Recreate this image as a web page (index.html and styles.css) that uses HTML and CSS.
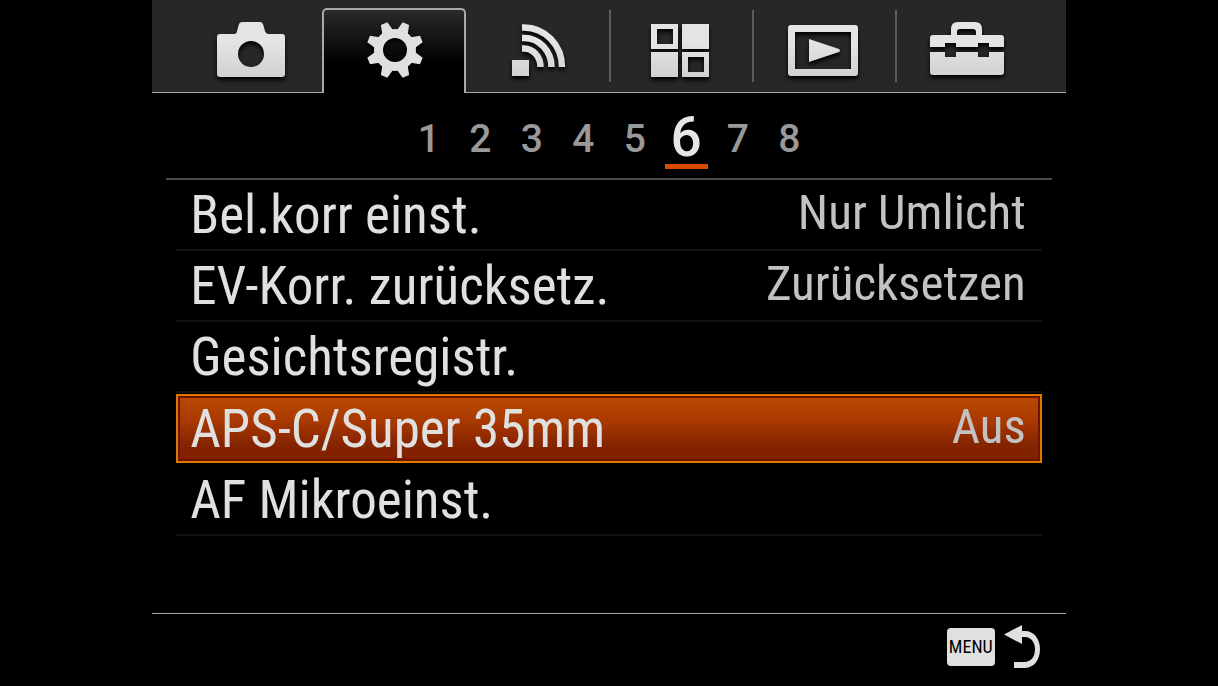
FILE: index.html
```html
<!DOCTYPE html>
<html lang="de">
<head>
<meta charset="utf-8">
<title>Kameramenü</title>
<link rel="stylesheet" href="styles.css">
</head>
<body>
<main class="screen">
  <svg class="defs" width="0" height="0" aria-hidden="true">
    <defs>
      <linearGradient id="metal" gradientUnits="userSpaceOnUse" x1="0" y1="0" x2="0" y2="64">
        <stop offset="0.4" stop-color="#e4e4e4"/><stop offset="1" stop-color="#cfcfcf"/>
      </linearGradient>
    </defs>
  </svg>
  <nav class="tabs" aria-label="Menükategorien">
    <button class="tab" type="button" aria-label="Kamera">
      <svg class="icon" viewBox="0 0 84 68"><path fill="url(#metal)" fill-rule="evenodd" d="M10 18H25Q27 17 27 15L29 8Q30 6 32 6H50Q52 6 53 8L55 15Q56 18 58 18H72Q75 18 75 21V58Q75 61 72 61H10Q7 61 7 58V21Q7 18 10 18ZM41 25A13 13 0 1 0 41 51A13 13 0 1 0 41 25Z"/></svg>
    </button>
    <button class="tab tab-active" type="button" aria-label="Benutzereinstellungen" aria-current="true">
      <svg class="icon" viewBox="0 0 84 68">
        <g fill="#e0e0e0" transform="translate(43 34)">
          <g transform="rotate(22.5)"><path d="M-6-18L-3.500-28.500H3.500L6-18ZM-6 18L-3.500 28.500H3.500L6 18ZM-18-6L-28.500-3.500V3.500L-18 6ZM18-6L28.500-3.500V3.500L18 6Z"/></g>
          <g transform="rotate(67.5)"><path d="M-6-18L-3.500-28.500H3.500L6-18ZM-6 18L-3.500 28.500H3.500L6 18ZM-18-6L-28.500-3.500V3.500L-18 6ZM18-6L28.500-3.500V3.500L18 6Z"/></g>
        </g>
        <circle cx="43" cy="34" r="16.5" fill="none" stroke="#e0e0e0" stroke-width="9"/>
      </svg>
    </button>
    <button class="tab" type="button" aria-label="Drahtlos">
      <svg class="icon" viewBox="0 0 84 68"><g fill="none" stroke="url(#metal)" stroke-width="6.5"><path d="M26 11.500H28A38 39.500 0 0 1 66 51"/><path d="M26 22H28A27.500 29 0 0 1 55.500 51"/><path d="M26 32.500H28A16.500 18.500 0 0 1 44.500 51"/></g><path fill="url(#metal)" d="M16 44H33V60H16Z"/></svg>
    </button>
    <button class="tab tab-divided" type="button" aria-label="Applikation">
      <svg class="icon" viewBox="0 0 84 68"><path fill="url(#metal)" fill-rule="evenodd" d="M13 8H40V33H13ZM19 13V28H35V13ZM44 8H71V33H44ZM13 36H40V61H13ZM44 36H71V61H44ZM50 41V56H66V41Z"/></svg>
    </button>
    <button class="tab tab-divided" type="button" aria-label="Wiedergabe">
      <svg class="icon" viewBox="0 0 84 68"><path fill="url(#metal)" fill-rule="evenodd" d="M10 9H74Q77 9 77 12V57Q77 60 74 60H10Q7 60 7 57V12Q7 9 10 9ZM14 16V53H70V16Z"/><path fill="url(#metal)" d="M28 23L58 33Q60 34.500 58 36L28 46Z"/></svg>
    </button>
    <button class="tab tab-divided" type="button" aria-label="Einstellung">
      <svg class="icon" viewBox="0 0 84 68"><path fill="url(#metal)" fill-rule="evenodd" d="M9 19H27V13Q27 6 34 6H51Q58 6 58 13V19H77Q80 19 80 22V31H65V27H54V31H32V27H21V31H6V22Q6 19 9 19ZM33 19H52V16Q52 13 49 13H36Q33 13 33 16ZM6 36H21V41H32V36H54V41H65V36H80V56Q80 59 77 59H9Q6 59 6 56Z"/></svg>
    </button>
  </nav>
  <nav class="pages" aria-label="Seiten">
    <button class="page" type="button">1</button>
    <button class="page" type="button">2</button>
    <button class="page" type="button">3</button>
    <button class="page" type="button">4</button>
    <button class="page" type="button">5</button>
    <button class="page page-active" type="button" aria-current="page">6</button>
    <button class="page" type="button">7</button>
    <button class="page" type="button">8</button>
  </nav>
  <section class="list">
    <button class="row" type="button"><span class="label">Bel.korr einst.</span><span class="value">Nur Umlicht</span></button>
    <button class="row" type="button"><span class="label">EV-Korr. zurücksetz.</span><span class="value">Zurücksetzen</span></button>
    <button class="row" type="button"><span class="label">Gesichtsregistr.</span></button>
    <button class="row row-selected" type="button"><span class="label">APS-C/Super 35mm</span><span class="value">Aus</span></button>
    <button class="row" type="button"><span class="label">AF Mikroeinst.</span></button>
  </section>
  <footer class="footer">
    <button class="back" type="button">
      <span class="menu-key">MENU</span>
      <svg class="arrow" viewBox="0 0 36 44" aria-label="Zurück"><path fill="#e0e0e0" d="M0 9.500L18 0V6H21C30 6 36 14 36 24C36 35 30 43 20 43H10V37H20C27 37 31 32 31 24C31 17 27 12 21 12H18V19Z"/></svg>
    </button>
  </footer>
</main>
</body>
</html>
```
FILE: styles.css
```css
* {
  box-sizing: border-box;
}

body {
  margin: 0;
  background: #000;
  color: #e0e0e0;
  font-family: "Roboto Condensed", "Arial Narrow", Roboto, sans-serif;
}

button {
  margin: 0;
  padding: 0;
  border: 0;
  background: none;
  color: inherit;
  font: inherit;
}

.screen {
  display: flex;
  flex-direction: column;
  width: 75%;
  min-height: 100vh;
  margin: 0 auto;
}

.defs {
  position: absolute;
}

.tabs {
  display: grid;
  grid-template-columns: repeat(6, 1fr);
  padding: 0 28px;
  background: #272727;
  border-bottom: 1px solid #a8a8a8;
}

.tab {
  display: flex;
  justify-content: center;
  padding: 16px 0 8px;
}

.tab-active {
  margin: 8px 0 -1px -1px;
  padding-top: 6px;
  border: 2px solid #a8a8a8;
  border-bottom: 0;
  border-radius: 5px 5px 0 0;
  background: linear-gradient(#2a2a2a, #000 65%);
}

.tab-divided {
  background: linear-gradient(#5c5c5c, #5c5c5c) 0 10px / 2px 72px no-repeat;
}

.icon {
  width: 84px;
  height: 68px;
  filter: drop-shadow(0 3px 2px #000);
}

.pages {
  display: grid;
  grid-template-columns: repeat(8, 1fr);
  align-items: center;
  width: 412px;
  height: 85px;
  margin: 0 auto;
  padding-top: 6px;
  font-family: Roboto, "Liberation Sans", sans-serif;
  font-size: 39px;
  font-weight: 500;
  line-height: 54px;
  color: #999;
}

.page-active {
  justify-self: center;
  width: 43px;
  padding-top: 2px;
  border-bottom: 5px solid #d84c00;
  color: #e6e6e6;
  font-size: 55px;
}

.list {
  margin: 0 14px;
  padding: 0 10px;
  border-top: 2px solid #4a4a4a;
}

.row {
  display: flex;
  align-items: center;
  justify-content: space-between;
  width: 100%;
  height: 71px;
  padding: 0 16px 0 14px;
  border-bottom: 2px solid #121212;
  line-height: 64px;
  text-align: left;
}

.row-selected {
  height: 69px;
  margin: 1px 0 2px;
  border: 2px solid #e07800;
  padding: 0 14px 0 12px;
  background: linear-gradient(#b84a00, #a83800 40%, #842400 75%, #802000);
  box-shadow: inset 0 0 0 2px #6c1400;
}

.label {
  font-size: 53px;
}

.value {
  color: #c2c2c2;
  font-size: 49px;
  line-height: 60px;
  padding-bottom: 4px;
}

.footer {
  display: flex;
  justify-content: flex-end;
  margin-top: auto;
  padding: 11px 26px 17px;
  border-top: 1px solid #a8a8a8;
}

.back {
  display: flex;
  align-items: center;
  gap: 9px;
}

.menu-key {
  width: 48px;
  border-radius: 4px;
  background: #e0e0e0;
  color: #000;
  font-size: 18px;
  line-height: 38px;
  text-align: center;
}

.arrow {
  width: 36px;
  height: 44px;
}
```
